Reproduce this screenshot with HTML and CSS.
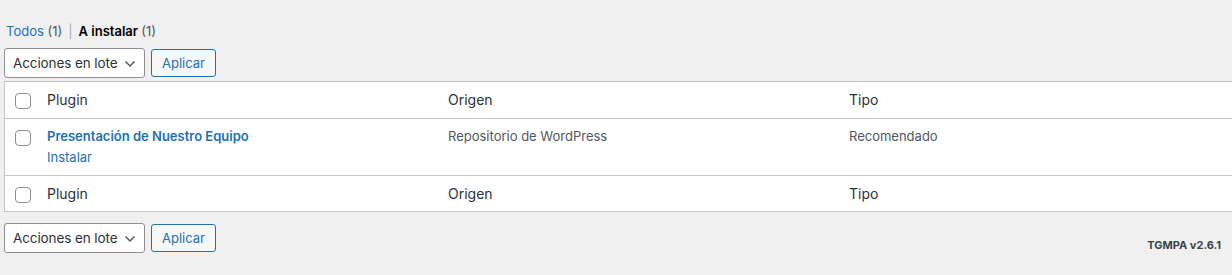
FILE: index.html
```html
<!DOCTYPE html>
<html lang="es">
<head>
  <meta charset="UTF-8" />
  <title>Instalar plugins requeridos</title>
  <link rel="stylesheet" href="styles.css">
</head>
<body>
  <div class="wrap">
    <ul class="subsubsub">
      <li><a href="#">Todos</a> <span class="count">(1)</span></li>
      <li class="sep">|</li>
      <li class="current">A instalar <span class="count">(1)</span></li>
    </ul>

    <div class="tablenav">
      <span class="select-wrap">
        <select>
          <option>Acciones en lote</option>
        </select>
        <svg class="chevron" width="12" height="8" viewBox="0 0 12 8"><polyline points="1.5,1.5 6,6 10.5,1.5" fill="none" stroke="#50575e" stroke-width="1.5"/></svg>
      </span>
      <button class="button">Aplicar</button>
    </div>

    <div class="table-clip">
      <table class="list-table">
        <colgroup>
          <col class="col-check">
          <col class="col-main">
          <col class="col-main">
          <col class="col-main">
        </colgroup>
        <thead>
          <tr>
            <td class="check-column"><span class="checkbox"></span></td>
            <th>Plugin</th>
            <th>Origen</th>
            <th>Tipo</th>
          </tr>
        </thead>
        <tbody>
          <tr>
            <th class="check-column"><span class="checkbox"></span></th>
            <td>
              <strong><a href="#" class="plugin-name">Presentación de Nuestro Equipo</a></strong>
              <div class="row-actions"><a href="#">Instalar</a></div>
            </td>
            <td>Repositorio de WordPress</td>
            <td>Recomendado</td>
          </tr>
        </tbody>
        <tfoot>
          <tr>
            <td class="check-column"><span class="checkbox"></span></td>
            <th>Plugin</th>
            <th>Origen</th>
            <th>Tipo</th>
          </tr>
        </tfoot>
      </table>
    </div>

    <div class="tablenav bottom">
      <div class="actions">
        <span class="select-wrap">
          <select>
            <option>Acciones en lote</option>
          </select>
          <svg class="chevron" width="12" height="8" viewBox="0 0 12 8"><polyline points="1.5,1.5 6,6 10.5,1.5" fill="none" stroke="#50575e" stroke-width="1.5"/></svg>
        </span>
        <button class="button">Aplicar</button>
      </div>
      <p class="version">TGMPA v2.6.1</p>
    </div>
  </div>
</body>
</html>
```

FILE: styles.css
```css
html, body {
  overflow: hidden;
}

body {
  margin: 0;
  background: #f0f0f1;
  color: #3c434a;
  font-family: "Inter", "Liberation Sans", sans-serif;
  font-size: 13px;
}

a {
  color: #2271b1;
  text-decoration: none;
}

.wrap {
  padding: 18px 0 0 4px;
}

.subsubsub {
  list-style: none;
  margin: 0 0 0 2px;
  padding: 0;
  display: flex;
  gap: 6px;
  line-height: 26px;
  font-size: 13px;
}

.subsubsub .count {
  color: #50575e;
}

.subsubsub .sep {
  color: #a7aaad;
}

.subsubsub .current {
  color: #000;
  font-weight: 600;
}

.subsubsub .current .count {
  font-weight: 400;
}

.tablenav {
  display: flex;
  align-items: center;
  gap: 6px;
  margin: 4px 0 3px;
  height: 30px;
}

.tablenav.bottom {
  margin: 11px 0 0;
  justify-content: space-between;
  padding-right: 11px;
}

.tablenav .actions {
  display: flex;
  align-items: center;
  gap: 6px;
}

.select-wrap {
  position: relative;
  display: inline-block;
}

select {
  appearance: none;
  -webkit-appearance: none;
  width: 141px;
  height: 30px;
  padding: 0 22px 0 8px;
  border: 1px solid #8c8f94;
  border-radius: 3px;
  background: #fff;
  color: #2c3338;
  font-family: inherit;
  font-size: 13.5px;
  letter-spacing: -0.1px;
  display: block;
}

.chevron {
  position: absolute;
  right: 9px;
  top: 12px;
  pointer-events: none;
}

.button {
  height: 28px;
  padding: 0 10px;
  border: 1px solid #2271b1;
  border-radius: 3px;
  background: #f6f7f7;
  color: #2271b1;
  font-family: inherit;
  font-size: 13px;
  cursor: pointer;
}

.table-clip {
  overflow: hidden;
}

.list-table {
  width: 1237px;
  table-layout: fixed;
  border-spacing: 0;
  border: 1px solid #c3c4c7;
  background: #fff;
  box-shadow: 0 1px 1px rgba(0, 0, 0, 0.04);
}

.col-check {
  width: 32px;
}

.col-main {
  width: 401px;
}

.list-table th,
.list-table td {
  text-align: left;
  vertical-align: top;
  padding: 8px 10px;
  line-height: 19px;
  font-weight: 400;
}

.list-table thead th,
.list-table tfoot th {
  color: #2c3338;
  font-size: 14px;
  line-height: 19.6px;
}

.list-table tbody td {
  color: #50575e;
}

.list-table thead th,
.list-table thead td {
  border-bottom: 1px solid #c3c4c7;
}

.list-table tfoot th,
.list-table tfoot td {
  border-top: 1px solid #c3c4c7;
}

.list-table .check-column {
  padding: 11px 0 0 10px;
}

.checkbox {
  display: block;
  width: 14px;
  height: 14px;
  border: 1px solid #8c8f94;
  border-radius: 4px;
  background: #fff;
}

.plugin-name {
  font-weight: 600;
}

.row-actions {
  padding-top: 2px;
}

.version {
  margin: 14px 0 0;
  font-size: 11px;
  font-weight: 700;
  color: #3c434a;
}
```
